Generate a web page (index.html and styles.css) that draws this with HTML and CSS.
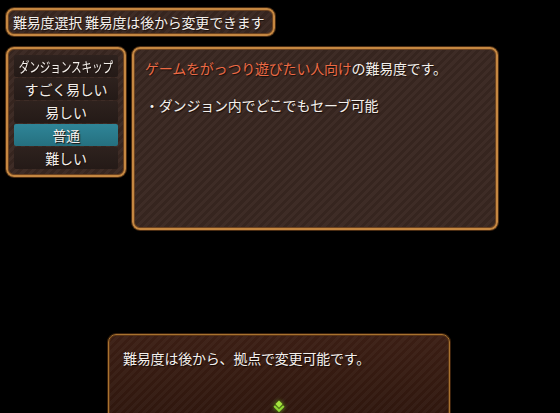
FILE: index.html
```html
<!DOCTYPE html>
<html lang="ja">
<head>
    <meta charset="UTF-8">
    <title>難易度選択</title>
    <link rel="stylesheet" href="styles.css">
</head>
<body>
    <div class="screen">
        <!-- Title window -->
        <div class="window title-window">難易度選択&nbsp;難易度は後から変更できます</div>

        <div class="select-row">
            <!-- Difficulty list -->
            <div class="window menu-window">
                <div class="menu-item"><span class="squeeze">ダンジョンスキップ</span></div>
                <div class="menu-item">すごく易しい</div>
                <div class="menu-item">易しい</div>
                <div class="menu-item selected">普通</div>
                <div class="menu-item">難しい</div>
            </div>

            <!-- Description -->
            <div class="window desc-window">
                <p><span class="accent">ゲームをがっつり遊びたい人向け</span>の難易度です。</p>
                <p class="note">・ダンジョン内でどこでもセーブ可能</p>
            </div>
        </div>

        <!-- Message window -->
        <div class="message-window">
            <p>難易度は後から、拠点で変更可能です。</p>
            <svg class="next-mark" width="12" height="12" viewBox="0 0 12 12">
                <polygon points="6,0.5 9.5,4 6,7.5 2.5,4" fill="#a6e640"/>
                <polyline points="1.2,6 6,10.8 10.8,6" fill="none" stroke="#8fd634" stroke-width="2"/>
            </svg>
        </div>
    </div>
</body>
</html>
```

FILE: styles.css
```css
body {
    margin: 0;
    background: #000;
    overflow: hidden;
    font-family: "Noto Sans CJK JP", "Noto Sans", sans-serif;
    color: #f4f0ec;
}

.screen {
    width: 560px;
    height: 413px;
    padding: 8px 0 0 6px;
    box-sizing: border-box;
}

p {
    margin: 0;
}

.window {
    border: 2px solid #c58741;
    border-radius: 8px;
    box-shadow: 0 0 0 1px #4a2c12, inset 0 0 0 1px #6b4220;
    background: repeating-linear-gradient(135deg, #3e2c26 0 3px, #36251f 3px 6px);
    box-sizing: border-box;
    text-shadow: 1px 1px 1px #1a0f0a;
}

.title-window {
    display: inline-block;
    width: 269px;
    height: 28px;
    padding: 0 0 0 5px;
    font-size: 14px;
    letter-spacing: -0.2px;
    line-height: 24px;
    white-space: nowrap;
}

.select-row {
    display: flex;
    align-items: flex-start;
    gap: 6px;
    margin-top: 11px;
}

.menu-window {
    width: 120px;
    height: 130px;
    padding: 6px 6px 0 6px;
    display: flex;
    flex-direction: column;
    gap: 1px;
}

.menu-item {
    height: 22px;
    line-height: 22px;
    display: flex;
    justify-content: center;
    font-size: 14px;
    letter-spacing: -0.2px;
    background: linear-gradient(#2e221e, #241a17);
    border-radius: 2px;
}

.menu-item.selected {
    background: linear-gradient(#2f8598, #25707f);
}

.squeeze {
    flex-shrink: 0;
    white-space: nowrap;
    transform: scaleX(0.76);
}

.desc-window {
    width: 366px;
    height: 183px;
    padding: 9px 0 0 11px;
    font-size: 14px;
    letter-spacing: -0.2px;
    line-height: 20px;
}

.accent {
    color: #ec6a45;
}

.note {
    margin-top: 17px;
}

.message-window {
    width: 342px;
    height: 90px;
    margin: 104px 0 0 102px;
    border: 1px solid #a8722f;
    border-radius: 8px;
    box-shadow: 0 0 0 1px #3a200c, inset 0 0 0 1px #5a3416;
    background:
        repeating-linear-gradient(135deg, rgba(255, 255, 255, 0.03) 0 3px, transparent 3px 6px),
        linear-gradient(#3b1e14, #2e160d);
    box-sizing: border-box;
    padding: 13px 0 0 14px;
    font-size: 14px;
    letter-spacing: -0.2px;
    line-height: 20px;
    text-shadow: 1px 1px 1px #120805;
    display: flex;
    flex-direction: column;
}

.next-mark {
    align-self: center;
    margin: 32px 14px 0 0;
    filter: drop-shadow(0 0 2px #6fbf20);
}
```
